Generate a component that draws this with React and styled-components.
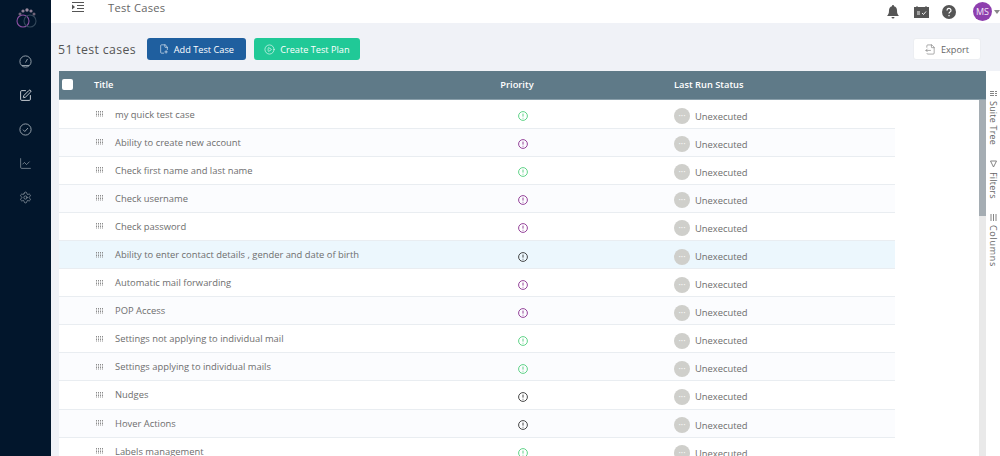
import React from 'react';
import styled, { createGlobalStyle } from 'styled-components';
import { SquarePen, ChartLine, Settings, FilePlus2, CirclePlay, FileOutput } from 'lucide-react';

const Global = createGlobalStyle`
  html, body { margin: 0; padding: 0; height: 456px; overflow: hidden; background: #f0f2f7; }
  * { box-sizing: border-box; }
  body { font-family: "Open Sans", "Noto Sans", sans-serif; }
`;
const Shell = styled.div`display: flex; width: 1000px; height: 456px; overflow: hidden;`;
const Sidebar = styled.aside`width: 51px; flex: none; background: #02162c; display: flex; flex-direction: column; align-items: center;`;
const Logo = styled.svg`width: 24px; height: 24px; margin-top: 6px; margin-bottom: 14px;`;
const NavIcon = styled.span`height: 34px; display: flex; align-items: center; justify-content: center; color: ${p => p.$active ? '#e6e9ec' : '#a2abb4'};`;
const Main = styled.div`flex: 1; min-width: 0; display: flex; flex-direction: column;`;
const TopBar = styled.header`height: 23px; flex: none; background: #fff; display: flex; align-items: center; padding: 0 0 9px 21px; color: #555;`;
const PageTitle = styled.h1`margin: 0 0 0 24px; font-size: 11.2px; font-weight: 400; color: #666; letter-spacing: .25px;`;
const TopActions = styled.div`margin-left: auto; display: flex; align-items: center; padding-top: 9px;`;
const Bell = styled.svg`width: 12px; height: 14px; margin-right: 15px;`;
const Calendar = styled.svg`width: 15px; height: 12px; margin-right: 13px;`;
const Help = styled.svg`width: 14px; height: 14px; margin-right: 17px;`;
const Avatar = styled.span`width: 19px; height: 19px; border-radius: 50%; background: #8e3fae; color: #f3e8f7; font-size: 9px; display: flex; align-items: center; justify-content: center;`;
const Caret = styled.span`width: 0; height: 0; border: 3px solid transparent; border-top: 4px solid #888; margin: 4px 0 0 2px;`;
const Toolbar = styled.div`height: 48px; flex: none; display: flex; align-items: center; padding: 4px 19px 0 7px;`;
const Count = styled.span`font-size: 12.3px; color: #555; letter-spacing: .35px; margin-right: 11px;`;
const Button = styled.button`height: 22px; border: 0; border-radius: 3px; background: ${p => p.$bg}; color: #fff; font: 400 9.2px "Open Sans", sans-serif; display: flex; align-items: center; justify-content: center; gap: 5px; width: ${p => p.$w}px; margin-right: 8px; padding: 0;`;
const Export = styled(Button)`background: #fff; color: #666; margin: 0 0 0 auto; border: 1px solid #eceef2;`;
const Work = styled.div`flex: 1; min-height: 0; display: flex; padding-left: 8px;`;
const Table = styled.div`width: 927px; flex: none; display: flex; flex-direction: column;`;
const Head = styled.div`height: 28.5px; flex: none; background: #5f7a88; border-bottom: 1px solid #8a9faa; color: #fff; font-size: 9.3px; font-weight: 600; display: grid; grid-template-columns: 431px 173px 1fr; align-items: center;`;
const TitleHead = styled.div`display: flex; align-items: center; padding-left: 3px;`;
const Check = styled.span`width: 11px; height: 11px; background: #fff; border-radius: 2px; margin-right: 21px;`;
const CenterHead = styled.div`text-align: center; width: 34px; white-space: nowrap; margin-left: 10px;`;
const LastHead = styled(CenterHead)`text-align: left; margin-left: 11px;`;
const Body = styled.div`flex: 1; min-height: 0; background: #fff; display: flex; overflow: hidden;`;
const Rows = styled.div`width: 836px; flex: none; padding-top: 1px;`;
const Row = styled.div`height: 28.1px; display: grid; grid-template-columns: 431px 173px 1fr; align-items: center; font-size: 9.4px; color: #6e6e6e; border-bottom: 1px solid #e9edf1; background: ${p => p.$hi ? '#ecf7fd' : p.$alt ? '#fbfcfe' : '#fff'};`;
const TitleCell = styled.div`display: flex; align-items: center; padding-left: 37px; white-space: nowrap;`;
const Grip = styled.svg`width: 8px; height: 6px; margin-right: 11px; flex: none;`;
const PriorityCell = styled.div`padding-left: 28px; display: flex; padding-top: 4px;`;
const StatusCell = styled.div`display: flex; align-items: center; gap: 5px; padding-left: 11px; padding-top: 4px;`;
const Dots = styled.span`width: 16px; height: 16px; border-radius: 50%; background: #cfcfcb; color: #fff; font-size: 9px; line-height: 15px; text-align: center;`;
const Track = styled.div`width: 7px; margin-left: auto; background: #e9e9e9; flex: none;`;
const Thumb = styled.div`height: 116px; background: #a5adb3;`;
const Side = styled.div`flex: 1; background: #fff; display: flex; flex-direction: column; align-items: center; gap: 15px; padding-top: 18px; color: #666; font-size: 9px;`;
const SideTab = styled.div`writing-mode: vertical-rl; display: flex; align-items: center; gap: 3px; white-space: nowrap; line-height: 14px; letter-spacing: .2px;`;
const ColumnsTab = styled(SideTab)`letter-spacing: .7px; margin-top: -1px;`;
const titles = ['my quick test case','Ability to create new account','Check first name and last name','Check username','Check password','Ability to enter contact details , gender and date of birth','Automatic mail forwarding','POP Access','Settings not applying to individual mail','Settings applying to individual mails','Nudges','Hover Actions','Labels management'];
const colors = ['#4fce7b','#8a2f8f','#4fce7b','#8a2f8f','#8a2f8f','#333','#8a2f8f','#8a2f8f','#4fce7b','#4fce7b','#333','#333','#4fce7b'];
const Prio = ({ c }) => <svg width="10" height="10" viewBox="0 0 10 10" fill="none" stroke={c}><circle cx="5" cy="5" r="4.4" strokeWidth=".9"/><path d="M5 2.6v3M5 6.8v.8" strokeWidth=".9"/></svg>;
const GripIcon = () => <Grip viewBox="0 0 8 6"><path d="M.5 0v6M2.5 0v6M4.5 0v6M6.5 0v6" stroke="#8c8c8c" strokeWidth="1" strokeDasharray="1 .5"/></Grip>;
const GaugeIcon = () => <svg width="13" height="13" viewBox="0 0 13 13" fill="none" stroke="currentColor" strokeWidth=".9"><circle cx="6.5" cy="6.5" r="5.6"/><path d="M6.5 7.5 8.5 4M3 10.5h7"/></svg>;
const CheckIcon = () => <svg width="13" height="13" viewBox="0 0 13 13" fill="none" stroke="currentColor" strokeWidth=".9"><circle cx="6.5" cy="6.5" r="5.6"/><path d="M4 6.700l1.800 1.800L9 5"/></svg>;
const Edit = () => <SquarePen size={13} strokeWidth={1.6}/>;
const Chart = () => <ChartLine size={13} strokeWidth={1.2}/>;
const Gear = () => <Settings size={13} strokeWidth={1.2}/>;
export default function App() {
  return <Shell><Global/>
    <Sidebar>
      <Logo viewBox="0 0 24 24" fill="none">
        <circle cx="9" cy="15" r="6" stroke="#8a4fa0" strokeWidth="1.1"/>
        <circle cx="16" cy="15" r="6" stroke="#33475a" strokeWidth="1.1"/>
        <circle cx="6" cy="8" r="1.5" fill="#6f6478"/><circle cx="9" cy="5" r="1.6" fill="#8f7f96"/><circle cx="13" cy="4" r="1.7" fill="#9a8a9e"/><circle cx="17" cy="5" r="1.6" fill="#8f7f96"/><circle cx="20" cy="8" r="1.5" fill="#6f6478"/>
      </Logo>
      {[GaugeIcon, Edit, CheckIcon, Chart, Gear].map((I, i) => <NavIcon key={i} $active={i === 1}><I/></NavIcon>)}
    </Sidebar>
    <Main>
      <TopBar>
        <svg width="12" height="10" viewBox="0 0 12 10" fill="none" stroke="#555"><path d="M0 .5h12M5 3.500h7M5 6.500h7M0 9.500h12"/><path d="M0 2.500 3 5 0 7.500z" fill="#555" stroke="none"/></svg>
        <PageTitle>Test Cases</PageTitle>
        <TopActions>
          <Bell viewBox="0 0 12 14"><path d="M6 0c.7 0 1 .5 1 1.200 2 .5 3 2.200 3 4.300 0 3 .7 4 2 5.500H0c1.300-1.500 2-2.500 2-5.500 0-2.100 1-3.800 3-4.300C5 .5 5.300 0 6 0zM4.500 12h3a1.500 1.500 0 0 1-3 0z" fill="#555"/></Bell>
          <Calendar viewBox="0 0 15 12"><path d="M0 1h15v11H0z" fill="#555"/><path d="M3 0v2M12 0v2" stroke="#555"/><path d="M3 6h3M3 8h3M8 7l1.500 1.500L12 5.500" stroke="#fff" strokeWidth=".9" fill="none"/></Calendar>
          <Help viewBox="0 0 14 14"><circle cx="7" cy="7" r="7" fill="#555"/><path d="M5 5.400a2 2 0 1 1 3 1.700c-.7.400-1 .8-1 1.500M7 10v1.200" stroke="#fff" strokeWidth="1.200" fill="none"/></Help>
          <Avatar>MS</Avatar><Caret/>
        </TopActions>
      </TopBar>
      <Toolbar>
        <Count>51 test cases</Count>
        <Button $bg="#1f5f9f" $w={99}><FilePlus2 size={10} strokeWidth={1.4}/>Add Test Case</Button>
        <Button $bg="#20c997" $w={106}><CirclePlay size={11} strokeWidth={1.3}/>Create Test Plan</Button>
        <Export $w={68}><FileOutput size={11} strokeWidth={1.2}/>Export</Export>
      </Toolbar>
      <Work>
        <Table>
          <Head>
            <TitleHead><Check/>Title</TitleHead>
            <CenterHead>Priority</CenterHead>
            <LastHead>Last Run Status</LastHead>
          </Head>
          <Body>
            <Rows>{titles.map((t, i) => <Row key={t} $alt={i % 2 === 1} $hi={i === 5}>
              <TitleCell><GripIcon/>{t}</TitleCell>
              <PriorityCell><Prio c={colors[i]}/></PriorityCell>
              <StatusCell><Dots>···</Dots>Unexecuted</StatusCell>
            </Row>)}</Rows>
            <Track><Thumb/></Track>
          </Body>
        </Table>
        <Side>
          <SideTab><svg width="9" height="9" viewBox="0 0 9 9"><path d="M1 2.500h7M1 4.500h7M1 6.500h7" stroke="#777" strokeWidth=".9" strokeDasharray="4 1"/></svg>Suite Tree</SideTab>
          <SideTab><svg width="9" height="9" viewBox="0 0 9 9" fill="none"><path d="M1.500 1h6L4.500 7z" stroke="#777" strokeWidth=".9"/></svg>Filters</SideTab>
          <ColumnsTab><svg width="9" height="9" viewBox="0 0 9 9"><path d="M2 1v7M4.500 1v7M7 1v7" stroke="#777" strokeWidth=".9"/></svg>Columns</ColumnsTab>
        </Side>
      </Work>
    </Main>
  </Shell>;
}
